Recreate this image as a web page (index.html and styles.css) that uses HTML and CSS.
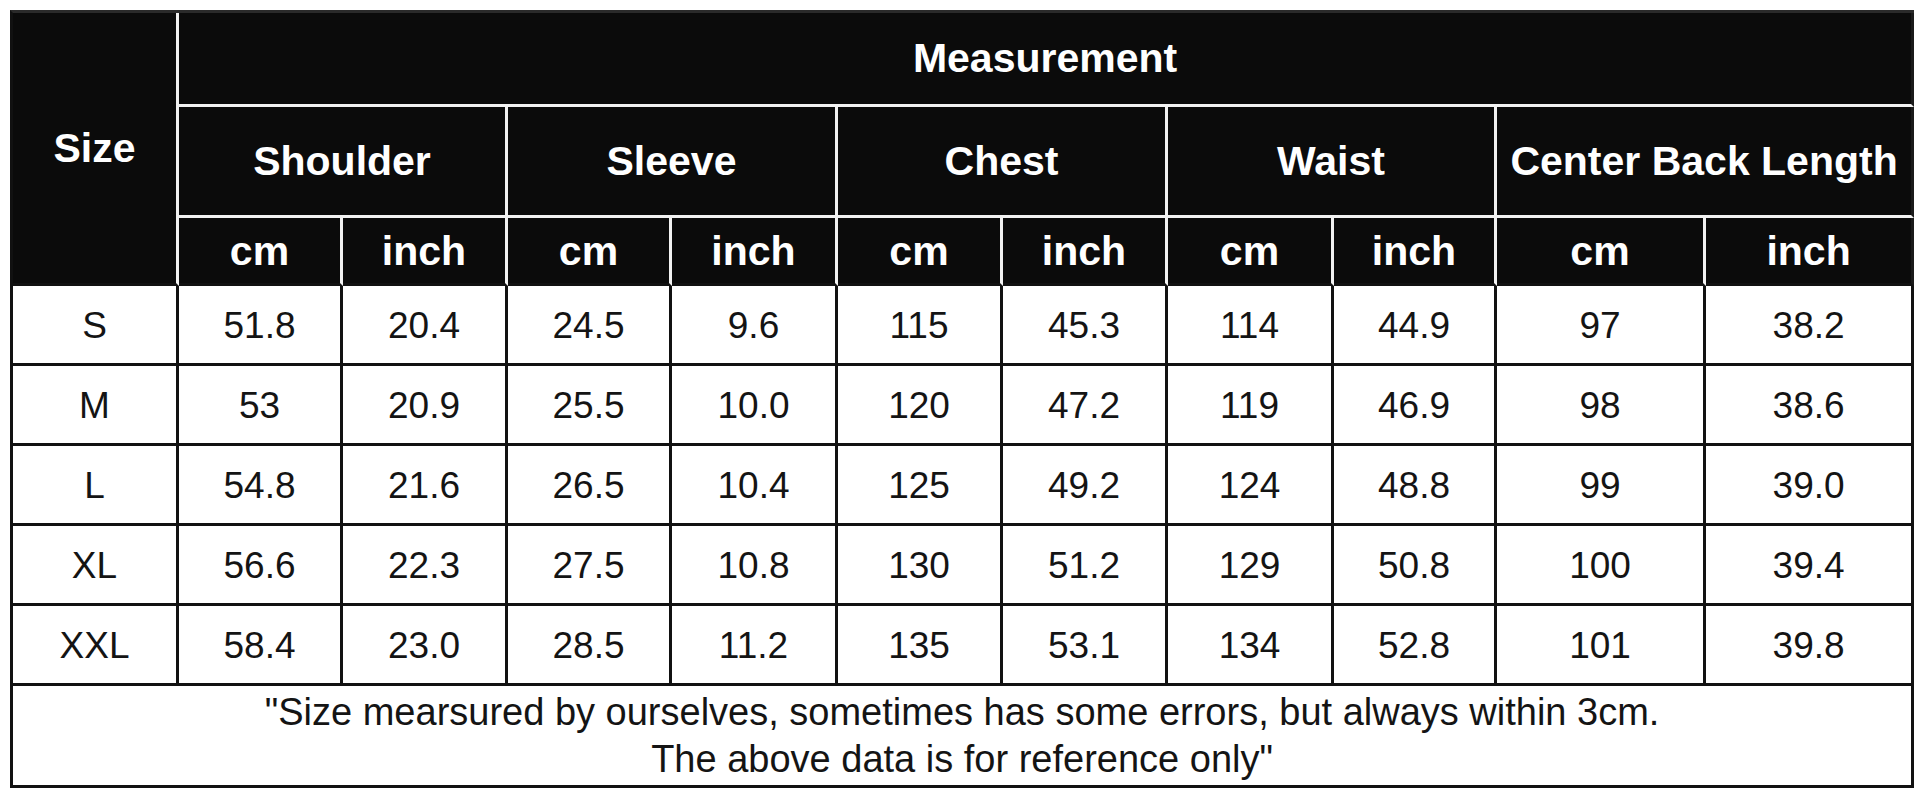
FILE: index.html
```html
<!DOCTYPE html>
<html>
<head>
<meta charset="utf-8">
<link rel="stylesheet" href="styles.css">
</head>
<body>
<table class="size-table">
  <colgroup>
    <col class="c-size">
    <col class="c-164"><col class="c-165">
    <col class="c-164"><col class="c-166">
    <col class="c-165"><col class="c-165">
    <col class="c-166"><col class="c-163">
    <col class="c-209"><col class="c-208">
  </colgroup>
  <thead>
    <tr class="r-top">
      <th rowspan="3" class="h-size">Size</th>
      <th colspan="10" class="last">Measurement</th>
    </tr>
    <tr class="r-group">
      <th colspan="2">Shoulder</th>
      <th colspan="2">Sleeve</th>
      <th colspan="2">Chest</th>
      <th colspan="2">Waist</th>
      <th colspan="2" class="last">Center Back Length</th>
    </tr>
    <tr class="r-unit">
      <th>cm</th><th>inch</th>
      <th>cm</th><th>inch</th>
      <th>cm</th><th>inch</th>
      <th>cm</th><th>inch</th>
      <th>cm</th><th class="last">inch</th>
    </tr>
  </thead>
  <tbody>
    <tr class="r-body">
      <td>S</td><td>51.8</td><td>20.4</td><td>24.5</td><td>9.6</td><td>115</td><td>45.3</td><td>114</td><td>44.9</td><td>97</td><td>38.2</td>
    </tr>
    <tr class="r-body">
      <td>M</td><td>53</td><td>20.9</td><td>25.5</td><td>10.0</td><td>120</td><td>47.2</td><td>119</td><td>46.9</td><td>98</td><td>38.6</td>
    </tr>
    <tr class="r-body">
      <td>L</td><td>54.8</td><td>21.6</td><td>26.5</td><td>10.4</td><td>125</td><td>49.2</td><td>124</td><td>48.8</td><td>99</td><td>39.0</td>
    </tr>
    <tr class="r-body">
      <td>XL</td><td>56.6</td><td>22.3</td><td>27.5</td><td>10.8</td><td>130</td><td>51.2</td><td>129</td><td>50.8</td><td>100</td><td>39.4</td>
    </tr>
    <tr class="r-body">
      <td>XXL</td><td>58.4</td><td>23.0</td><td>28.5</td><td>11.2</td><td>135</td><td>53.1</td><td>134</td><td>52.8</td><td>101</td><td>39.8</td>
    </tr>
    <tr class="r-note">
      <td colspan="11" class="note">"Size mearsured by ourselves, sometimes has some errors, but always within 3cm.<br>The above data is for reference only"</td>
    </tr>
  </tbody>
</table>
</body>
</html>
```
FILE: styles.css
```css
html, body {
  margin: 0;
  padding: 0;
  background: #ffffff;
}

body {
  padding: 10px 0 0 10px;
  font-family: "Liberation Sans", Arial, sans-serif;
}

.size-table {
  box-sizing: border-box;
  width: 1904px;
  table-layout: fixed;
  border-collapse: separate;
  border-spacing: 0;
  border-left: 3px solid #111111;
  border-top: 3px solid #2a2a2a;
}

.c-size { width: 166px; }
.c-163 { width: 163px; }
.c-164 { width: 164px; }
.c-165 { width: 165px; }
.c-166 { width: 166px; }
.c-208 { width: 208px; }
.c-209 { width: 209px; }

.size-table th,
.size-table td {
  box-sizing: border-box;
  padding: 0;
  text-align: center;
  vertical-align: middle;
  white-space: nowrap;
  overflow: hidden;
}

.size-table th {
  background: #0b0b0b;
  color: #ffffff;
  font-weight: bold;
  font-size: 41px;
  border-right: 3px solid #f2f2f2;
  border-bottom: 3px solid #f2f2f2;
}

.size-table th.last {
  border-right-color: #1a1a1a;
}

.size-table th.h-size {
  border-bottom-color: #111111;
}

.r-unit th {
  border-bottom-color: #111111;
}

.r-top th { height: 94px; }
.r-group th { height: 111px; }
.r-unit th { height: 68px; padding-top: 2px; }

.size-table td {
  color: #141414;
  font-size: 37px;
  height: 80px;
  padding-top: 3px;
  border-right: 3px solid #111111;
  border-bottom: 3px solid #111111;
}

.size-table td.note {
  height: 102px;
  padding-top: 0;
  font-size: 38px;
  line-height: 47px;
}
```
